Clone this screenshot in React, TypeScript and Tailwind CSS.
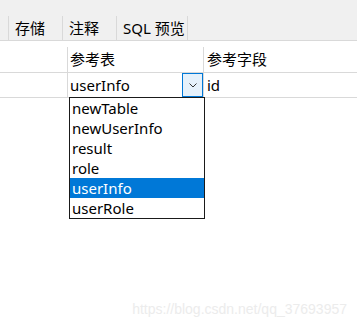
const FONT = { fontFamily: '"Noto Sans", "Noto Sans CJK SC", sans-serif' };

const tabs = ["存储", "注释", "SQL 预览"];
const widths = ["w-[54px]", "w-[54px]", "w-[72px]"];
const options = ["newTable", "newUserInfo", "result", "role", "userInfo", "userRole"];

export default function App() {
  return (
    <div className="relative h-[327px] w-[357px] overflow-hidden bg-white text-[15px] text-black" style={FONT}>
      {/* Tab strip */}
      <div className="h-[41px] border-b border-[#d9d9d9] bg-[#f0f0f0] pt-[16px]">
        <div className="flex h-[24px] pl-[8px]">
          {tabs.map((t, i) => (
            <div
              key={t}
              className={`${widths[i]} flex items-center border-l border-[#d9d9d9] pl-[6px] leading-none ${i === tabs.length - 1 ? "border-r" : ""}`}
            >
              {t}
            </div>
          ))}
        </div>
      </div>

      {/* Grid */}
      <div className="pt-[6px]">
        <div className="flex h-[26px] border-b border-[#d9d9d9]">
          <div className="w-[68px] border-r border-[#d9d9d9]" />
          <div className="flex w-[136px] items-center border-r border-[#d9d9d9] pl-[2px] leading-none">参考表</div>
          <div className="flex flex-1 items-center pl-[3px] leading-none">参考字段</div>
        </div>
        <div className="flex h-[25px] border-b border-[#d9d9d9]">
          <div className="w-[68px] border-r border-[#d9d9d9]" />
          <div className="flex w-[136px] items-center border-r border-[#d9d9d9]">
            <span className="flex-1 pl-[2px] leading-none">userInfo</span>
            <div className="flex h-[24px] w-[21px] items-center justify-center border border-[#0078d7] bg-[#e5f1fb]">
              <svg width="8" height="5" viewBox="0 0 8 5" fill="none">
                <path d="M0.5 0.5 L4 4 L7.5 0.5" stroke="#333" strokeWidth="1" />
              </svg>
            </div>
          </div>
          <div className="flex flex-1 items-center pl-[3px] leading-none">id</div>
        </div>
      </div>

      {/* Open dropdown list */}
      <div className="absolute left-[69px] top-[97px] w-[136px] border border-[#1a1a1a] bg-white">
        {options.map((o) => (
          <div
            key={o}
            className={`flex h-[20px] items-center pl-[2px] leading-none ${o === "userInfo" ? "bg-[#0078d7] text-white" : ""}`}
          >
            {o}
          </div>
        ))}
      </div>

      {/* Watermark */}
      <div
        className="absolute right-[10px] top-[299px] text-[14px] text-[#ececec]"
        style={{ fontFamily: '"Liberation Sans", Arial, sans-serif' }}
      >
        https://blog.csdn.net/qq_37693957
      </div>
    </div>
  );
}
